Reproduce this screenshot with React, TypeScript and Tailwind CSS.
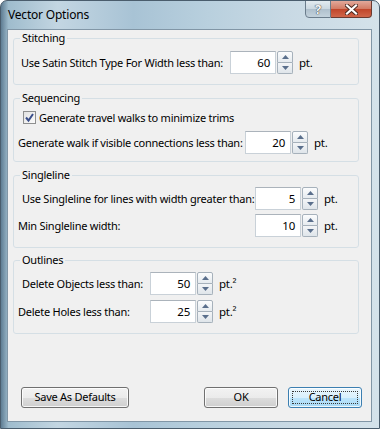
import React from "react";

const font = { fontFamily: '"Noto Sans", "Open Sans", sans-serif' };

function Spinner({ value, unit }: { value: string; unit: string }) {
  return (
    <div className="flex items-center">
      <div className="flex h-[23px] w-[46px] items-center justify-end border border-[#c9d1d8] border-t-[#abb3bb] bg-white pr-[5px] text-[11.5px] leading-none text-black">
        {value}
      </div>
      <div className="ml-px flex h-[23px] w-[16px] flex-col">
        <div className="flex flex-1 items-center justify-center rounded-t-[2px] border border-[#a6b1bb] bg-[linear-gradient(#fbfcfd,#e6ebef)]">
          <svg width="7" height="4" viewBox="0 0 7 4">
            <path d="M0 4 L3.5 0 L7 4 Z" fill="#5a6f8c" />
          </svg>
        </div>
        <div className="flex flex-1 items-center justify-center rounded-b-[2px] border border-t-0 border-[#a6b1bb] bg-[linear-gradient(#f3f5f7,#dfe5ea)]">
          <svg width="7" height="4" viewBox="0 0 7 4">
            <path d="M0 0 L3.5 4 L7 0 Z" fill="#5a6f8c" />
          </svg>
        </div>
      </div>
      <span className="ml-[6px] text-[11.5px]">{unit}</span>
    </div>
  );
}

function Row({
  label,
  ml,
  w,
  value,
  unit,
  className = "",
}: {
  label: string;
  ml: string;
  w: string;
  value: string;
  unit: string;
  className?: string;
}) {
  return (
    <div className={`flex items-center ${className}`}>
      <div className={`${ml} ${w} shrink-0 whitespace-nowrap leading-none`}>{label}</div>
      <Spinner value={value} unit={unit} />
    </div>
  );
}

function Group({
  title,
  className,
  children,
}: {
  title: string;
  className: string;
  children: React.ReactNode;
}) {
  return (
    <fieldset className={`w-[346px] rounded-[3px] border border-[#d5dfe5] ${className}`}>
      <legend className="ml-[6px] px-[2px] leading-[16px]">{title}</legend>
      {children}
    </fieldset>
  );
}

function Button({ children, w, focused = false }: { children: React.ReactNode; w: string; focused?: boolean }) {
  return (
    <div
      className={`relative flex h-[21px] ${w} items-center justify-center rounded-[3px] border shadow-[inset_0_0_0_1px_rgba(255,255,255,0.8)] ${
        focused
          ? "border-[#3c7fb1] bg-[linear-gradient(#eaf6fd_0%,#d9f0fc_50%,#bee6fd_50%,#a7d9f5_100%)]"
          : "border-[#707070] bg-[linear-gradient(#f2f2f2_0%,#ebebeb_50%,#dddddd_50%,#cfcfcf_100%)]"
      }`}
    >
      {focused && <div className="absolute inset-[3px] border border-dotted border-[#3a3a3a]" />}
      <span className="relative">{children}</span>
    </div>
  );
}

export default function App() {
  return (
    <div
      style={font}
      className="relative h-[429px] w-[380px] overflow-hidden rounded-t-[7px] border border-[#4a5d6d] bg-[linear-gradient(90deg,#5f7d93_0%,#9fbccd_2%,#c3d6e2_15%,#a8c3d5_35%,#b9d0de_55%,#c8d9e4_75%,#d4e2ea_100%)] text-[11px] tracking-[-0.25px] text-black"
    >
      {/* Title bar */}
      <div className="flex h-[28px] items-start justify-between pl-[7px] pr-[7px]">
        <div className="mt-[6px] text-[12px] leading-[16px] tracking-[-0.2px] text-black">Vector Options</div>
        <div className="flex -mt-px">
          <div className="flex h-[18px] w-[26px] items-center justify-center rounded-bl-[4px] border border-[#6b7d8c] bg-[linear-gradient(#e3ebf0_0%,#cad7e0_50%,#aebfcc_50%,#c3d2dc_100%)] text-[13px] font-bold leading-none text-[#f4f6f8] [text-shadow:0_0_1px_#333,0_0_1px_#333]">
            ?
          </div>
          <div className="flex h-[18px] w-[41px] items-center justify-center rounded-br-[4px] border border-l-0 border-[#6b3a30] bg-[linear-gradient(#e2a99b_0%,#d27a63_50%,#c0452a_50%,#d0664a_100%)]">
            <svg width="13" height="11" viewBox="0 0 13 11">
              <path d="M2 1.5 L11 9.5 M11 1.5 L2 9.5" stroke="#4a2a22" strokeWidth="4" strokeLinecap="square" />
              <path d="M2 1.5 L11 9.5 M11 1.5 L2 9.5" stroke="#ffffff" strokeWidth="2.2" strokeLinecap="square" />
            </svg>
          </div>
        </div>
      </div>

      {/* Client area */}
      <div className="ml-[6px] flex h-[393px] w-[365px] flex-col border border-[#8196a6] bg-[#f0f0f0] pl-[5px] pt-0">
        <Group title="Stitching" className="h-[55px]">
          <Row className="mt-[5px]" label="Use Satin Stitch Type For Width less than:" ml="ml-[7px]" w="w-[209px]" value="60" unit="pt." />
        </Group>

        <Group title="Sequencing" className="mt-[5px] h-[72px]">
          <div className="ml-[9px] mt-[5px] flex items-center">
            <div className="flex h-[13px] w-[13px] items-center justify-center border border-[#8e8f8f] bg-[linear-gradient(135deg,#e2e2e2,#fbfbfb)]">
              <svg width="11" height="11" viewBox="0 0 11 11">
                <path d="M2 5.5 L4.5 8.5 L9 2" stroke="#3b4f8a" strokeWidth="2" fill="none" />
              </svg>
            </div>
            <span className="ml-[3px] whitespace-nowrap leading-none">Generate travel walks to minimize trims</span>
          </div>
          <Row className="mt-[7px]" label="Generate walk if visible connections less than:" ml="ml-[4px]" w="w-[227px]" value="20" unit="pt." />
        </Group>

        <Group title="Singleline" className="mt-[5px] h-[81px]">
          <Row className="mt-[4px]" label="Use Singleline for lines with width greater than:" ml="ml-[8px]" w="w-[233px]" value="5" unit="pt." />
          <Row className="mt-[4px]" label="Min Singleline width:" ml="ml-[4px]" w="w-[237px]" value="10" unit="pt." />
        </Group>

        <Group title="Outlines" className="mt-[4px] h-[82px]">
          <Row className="mt-[4px]" label="Delete Objects less than:" ml="ml-[8px]" w="w-[128px]" value="50" unit="pt.²" />
          <Row className="mt-[5px]" label="Delete Holes less than:" ml="ml-[4px]" w="w-[132px]" value="25" unit="pt.²" />
        </Group>

        <div className="mt-auto mb-[13px] flex items-center">
          <div className="ml-[8px]">
            <Button w="w-[108px]">Save As Defaults</Button>
          </div>
          <div className="ml-[75px]">
            <Button w="w-[74px]">OK</Button>
          </div>
          <div className="ml-[10px]">
            <Button w="w-[74px]" focused>
              Cancel
            </Button>
          </div>
        </div>
      </div>
    </div>
  );
}
